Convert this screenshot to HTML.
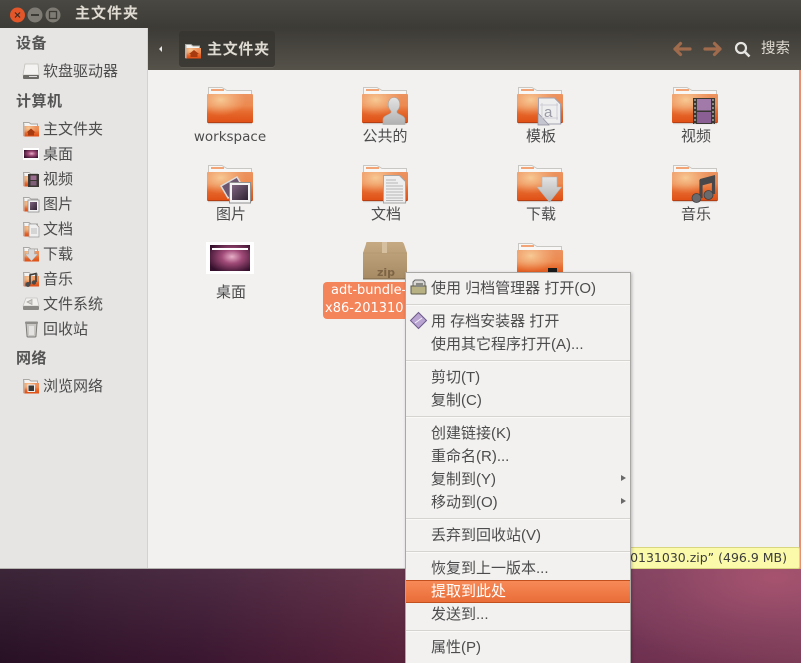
<!DOCTYPE html>
<html lang="zh"><head><meta charset="utf-8"><title>主文件夹</title>
<style>
html,body{margin:0;padding:0;width:801px;height:663px;overflow:hidden;background:#3a1a30}
body{position:relative;font-family:"Liberation Sans","Noto Sans CJK SC",sans-serif;font-size:15px;color:#4c4c4c}
div{position:absolute;white-space:nowrap}
svg{position:absolute;left:0;top:0}
#desk{left:0;top:568px;width:801px;height:95px;background:radial-gradient(ellipse 200px 90px at 775px 10px,rgba(170,84,112,.9) 0%,rgba(150,74,104,.5) 55%,rgba(130,60,90,0) 100%),linear-gradient(to bottom,rgba(255,255,255,.09),rgba(255,255,255,0)),linear-gradient(to right,#281024 0%,#3a1630 25%,#57213a 50%,#6f3050 80%,#7a3a55 100%)}
#win{left:0;top:0;width:799px;height:568px;background:#f2f1f0;border-bottom:1px solid #b5b3af}
#edge{left:799px;top:70px;width:2px;height:499px;background:#e88f72}
#title{left:0;top:0;width:801px;height:28px;background:linear-gradient(#4a4842,#3c3b36)}
#tool{left:148px;top:28px;width:653px;height:42px;background:linear-gradient(#3d3b36,#55524a)}
#side{left:0;top:28px;width:147px;height:540px;background:#e6e5e3;border-right:1px solid #d4d2cf}
#path{left:179px;top:31px;width:96px;height:36px;background:linear-gradient(#383631,#3d3a35);border-radius:3px;box-shadow:0 1px 0 #5e5b53}
.t{line-height:20px;height:20px}
.h{font-weight:bold;left:16px;color:#555;letter-spacing:.5px}
.s{left:43px}
.l{width:130px;text-align:center;color:#4c4c4c}
#sel{left:323px;top:282px;width:120px;height:37px;background:#f4845a;border-radius:4px}
#sel div{color:#fff;left:8px;font-family:"DejaVu Sans",sans-serif;font-size:13px;line-height:18px}
#tip{left:625px;top:547px;width:173px;height:20px;background:#fbfaaa;border:1px solid #d8d67e;border-radius:2px}
#tip div{right:12px;top:0;font-family:"DejaVu Sans",sans-serif;font-size:12.5px;color:#3c3c3c;line-height:20px}
#menu{left:405px;top:272px;width:224px;height:392px;background:#f2f1f0;border:1px solid #aaa8a4;box-shadow:1px 1px 3px rgba(0,0,0,.25)}
.m{left:25px;height:20px;line-height:20px;color:#4c4c4c}
.sep{left:0;width:224px;height:1px;background:#d6d4d1;border-bottom:1px solid #faf9f8}
.ar{left:215px;width:0;height:0;border-left:5px solid #6a6a6a;border-top:3.5px solid transparent;border-bottom:3.5px solid transparent}
#hi{left:0;top:307px;width:224px;height:21px;background:linear-gradient(#f78a58,#e96d38);border:1px solid #c2501f;border-left:0;border-right:0}
</style></head><body>
<div id="desk"></div>
<div id="win"></div><div id="edge"></div>
<div id="title"></div>
<div id="tool"></div>
<div id="side"></div>
<div id="path"></div>

<svg width="801" height="663" viewBox="0 0 801 663">
<defs>
<linearGradient id="fg" x1="0" y1="0" x2="0" y2="1"><stop offset="0" stop-color="#ec9360"/><stop offset=".4" stop-color="#ec8a50"/><stop offset=".62" stop-color="#e66a2e"/><stop offset="1" stop-color="#df4e14"/></linearGradient>
<radialGradient id="fl" cx=".3" cy=".2" r=".55"><stop offset="0" stop-color="#f8cd98" stop-opacity=".95"/><stop offset="1" stop-color="#f5b583" stop-opacity="0"/></radialGradient>
<radialGradient id="dk" cx=".55" cy=".45" r=".65"><stop offset="0" stop-color="#e8b0c8"/><stop offset=".4" stop-color="#a04a78"/><stop offset="1" stop-color="#35102c"/></radialGradient>
<linearGradient id="ph" x1="0" y1="0" x2="1" y2="1"><stop offset="0" stop-color="#7e6480"/><stop offset="1" stop-color="#2f2233"/></linearGradient>
<linearGradient id="pg" x1="0" y1="0" x2="0" y2="1"><stop offset="0" stop-color="#e4e4e4"/><stop offset="1" stop-color="#b0b0b0"/></linearGradient>
<linearGradient id="zp" x1="0" y1="0" x2="0" y2="1"><stop offset="0" stop-color="#c6aa84"/><stop offset="1" stop-color="#a68a64"/></linearGradient>
<symbol id="f" viewBox="0 0 46 38" overflow="visible">
<path d="M1.5 9V1.500H15L20 4.500H44.500V9" fill="#f8f7f5" stroke="#c9c7c3"/>
<rect x="4" y="3" width="13" height="2" fill="#f2a476"/>
<rect x="0" y="8" width="46" height="29" rx="1" fill="url(#fg)"/>
<rect x="0" y="8" width="46" height="29" rx="1" fill="url(#fl)"/>
<rect x="1" y="36" width="44" height="1.200" fill="#b53f14"/>
<rect x="1" y="37.200" width="44" height="1" fill="#d5d3d0"/>
</symbol>
<symbol id="sf" viewBox="0 0 16 16" overflow="visible">
<path d="M.5 15V1.500H6L8 3H14.500V6" fill="#f4f3f1" stroke="#a9a7a3"/>
<rect x="1" y="5" width="15" height="10.500" fill="url(#fg)"/>
<rect x="1" y="5" width="15" height="10.500" fill="url(#fl)"/>
<rect x=".5" y="2.500" width="1" height="13" fill="#bbb"/>
</symbol>
</defs>

<circle cx="17.500" cy="15" r="7.500" fill="#e2562a"/><path d="M15 12.500l5 5M20 12.500l-5 5" stroke="#3b2a22" stroke-width="1.200"/>
<circle cx="35" cy="15" r="7.500" fill="#7d7b73"/><rect x="31" y="14" width="8" height="2" fill="#3c3b36"/>
<circle cx="53" cy="15" r="7.500" fill="#7d7b73"/><rect x="49.500" y="11.500" width="7" height="7" fill="none" stroke="#3c3b36" stroke-width="1.300"/>

<path d="M162 46v6l-3-3z" fill="#e8e8e8"/>
<g transform="translate(185,43)"><use href="#sf" width="16" height="16"/><path d="M4 11l5-4 5 4h-1.500v3h-7v-3z" fill="#a83a10"/></g>
<path d="M690 49h-15M680.500 43.500L675 49l5.500 5.500" fill="none" stroke="#a06a4c" stroke-width="3.200" stroke-linecap="round" stroke-linejoin="round"/>
<path d="M705 49h15M714.500 43.500L720 49l-5.500 5.500" fill="none" stroke="#a06a4c" stroke-width="3.200" stroke-linecap="round" stroke-linejoin="round"/>
<circle cx="741" cy="48" r="5" fill="none" stroke="#e6e5e2" stroke-width="2.200"/><path d="M745 52l4.500 4.500" stroke="#e6e5e2" stroke-width="2.600"/>

<path d="M25 64h13l1 11H23z" fill="#f4f3f1" stroke="#c2c0bc" stroke-width=".8"/><rect x="23" y="75" width="16" height="4" rx="1" fill="#6d6c69"/><rect x="29" y="76" width="8" height="1" fill="#ddd"/>
<g transform="translate(23,121)"><use href="#sf" width="16" height="16"/><path d="M3.500 11.500l4.500-4 4.500 4H11v3H5v-3z" fill="#a83a10"/></g>
<rect x="23" y="148" width="16" height="12" fill="#fff"/><rect x="24" y="150" width="14" height="8" fill="url(#dk)"/>
<g transform="translate(23,171)"><use href="#sf" width="16" height="16"/><rect x="5" y="3" width="11" height="13" fill="#3b3733"/><rect x="7.500" y="4.500" width="6" height="4.500" fill="#9b6d8e"/><rect x="7.500" y="10" width="6" height="4.500" fill="#7f5e78"/></g>
<g transform="translate(23,196)"><use href="#sf" width="16" height="16"/><rect x="5" y="4" width="11" height="12" fill="#f2f2f2" stroke="#8e8e8e" stroke-width=".8"/><rect x="7" y="6" width="7" height="8" fill="url(#ph)"/></g>
<g transform="translate(23,221)"><use href="#sf" width="16" height="16"/><path d="M6 3h7l3 3v10H6z" fill="#efefef" stroke="#9a9a9a" stroke-width=".7"/><path d="M8 8h6M8 10h6M8 12h6" stroke="#aaa" stroke-width=".8"/></g>
<g transform="translate(23,246)"><use href="#sf" width="16" height="16"/><path d="M5.500 3h6v5h3.500L8.500 15 2 8h3.500z" fill="#d8d8d8" stroke="#9f9f9f" stroke-width=".5"/></g>
<g transform="translate(23,271)"><use href="#sf" width="16" height="16"/><path d="M7 13V4l6-1.500V11" fill="none" stroke="#3b3a38" stroke-width="1.600"/><circle cx="5" cy="13.500" r="2.500" fill="#4a4a4a"/><circle cx="11" cy="11.500" r="2.200" fill="#4a4a4a"/></g>
<path d="M26 298h11l2 8H23z" fill="#f1f0ee" stroke="#c6c4c0" stroke-width=".8"/><rect x="23" y="306" width="16" height="4" rx="1" fill="#8a8985"/><path d="M27 302l5-2.500v5z" fill="#cfcdc9" stroke="#a4a29e" stroke-width=".7"/>
<path d="M26 323h11l-1 13a1 1 0 0 1-1 1h-7a1 1 0 0 1-1-1z" fill="#c8c7c4" stroke="#7c7b78"/><rect x="25" y="321.500" width="13" height="2.500" rx="1" fill="#8f8e8b"/><rect x="29" y="326" width="5" height="9" fill="#e4e3e1"/>
<g transform="translate(23,378)"><use href="#sf" width="16" height="16"/><rect x="5" y="7" width="6.500" height="6.500" fill="#3a3835" stroke="#eee" stroke-width="1"/></g>

<use href="#f" x="207" y="86" width="46" height="38"/>
<use href="#f" x="362" y="86" width="46" height="38"/>
<use href="#f" x="517" y="86" width="46" height="38"/>
<use href="#f" x="672" y="86" width="46" height="38"/>
<use href="#f" x="207" y="164" width="46" height="38"/>
<use href="#f" x="362" y="164" width="46" height="38"/>
<use href="#f" x="517" y="164" width="46" height="38"/>
<use href="#f" x="672" y="164" width="46" height="38"/>
<use href="#f" x="517" y="242" width="46" height="38"/>

<path d="M383 124.500v-5c0-4 6-4.500 8-7v-1.500c-2-2-2.800-4-2.800-6.500 0-4 2.300-7 5.800-7s5.800 3 5.800 7c0 2.500-.8 4.500-2.800 6.500v1.500c2 2.500 8 3 8 7v5z" fill="url(#pg)" stroke="#a4a4a2" stroke-width=".6"/>
<path d="M538.500 98h16l6 6v20h-22z" fill="#eeeeee" stroke="#a2a2b0"/>
<path d="M538 113l11 12h-11z" fill="#c5c5cf" stroke="#8e8e9c" stroke-width=".7"/>
<text x="544" y="117" font-family="Liberation Sans" font-size="15" fill="#9a9aa6">a</text>
<path d="M542 103v17M557 103v17M540 105h18M540 118h18" stroke="#c3c3cd" stroke-width=".7" fill="none"/>
<rect x="693" y="98" width="22" height="26" fill="#3b3834"/>
<rect x="697" y="99" width="14" height="11.500" fill="#a27aaa"/><rect x="697" y="112" width="14" height="11" fill="#8b5f94"/>
<path d="M695 99v25M713 99v25" stroke="#a09c96" stroke-width="1.600" stroke-dasharray="2 2"/>
<path d="M221 186l16-9 7 12-16 9z" fill="#6c5670" stroke="#dcdcdc" stroke-width="1.500"/>
<rect x="229.500" y="182.500" width="21" height="20.500" fill="#f3f3f3" stroke="#909090"/>
<rect x="232" y="185" width="16" height="15" fill="url(#ph)"/>
<path d="M383.500 175.500h16l6 6v21.500h-22z" fill="#eeeeee" stroke="#a6a6a6"/>
<path d="M386 180h10M386 183h12M386 186h17M386 189h17M386 192h17M386 195h17M386 198h17M386 200.500h17" stroke="#b5b5b5"/>
<path d="M542 177h15v10h4.500L549.500 202 537 187h5z" fill="url(#pg)" stroke="#b5b5b5" stroke-width=".6"/>
<path d="M701 198v-17l12.500-3v16" fill="none" stroke="#48474a" stroke-width="3.200"/><path d="M700 179l15-4v7l-15 4z" fill="#48474a"/>
<circle cx="696.500" cy="198" r="4.500" fill="#6a6a6c" stroke="#3f3f41" stroke-width=".8"/>
<circle cx="708.500" cy="195" r="4.500" fill="#6a6a6c" stroke="#3f3f41" stroke-width=".8"/>
<rect x="206" y="242" width="48" height="32" fill="#fff"/>
<rect x="210" y="245" width="40" height="26" fill="url(#dk)"/>
<rect x="212" y="248" width="36" height="2" fill="#fff"/>
<path d="M367 242h35q1 0 2 2l3 9v26h-44v-26l3-9q0-2 1-2z" fill="url(#zp)"/>
<path d="M363 253h44" stroke="#b59970"/>
<rect x="382" y="242" width="5" height="11" fill="#d5bf9f"/>
<rect x="363" y="278" width="44" height="1.500" fill="#8f7654"/>
<text x="377" y="276" font-family="DejaVu Sans" font-weight="bold" font-size="11" fill="#7d6444">zip</text>
<path d="M548 272v-4h9v4z" fill="#1a1a1a"/>
</svg>

<div class="t" style="left:75px;top:2px;font-weight:bold;color:#dfdbd2;letter-spacing:1px;line-height:24px;height:24px">主文件夹</div>
<div class="t" style="left:207px;top:40px;font-weight:bold;color:#dfdbd2;letter-spacing:.7px">主文件夹</div>
<div class="t" style="left:761px;top:39px;color:#dfdbd2;font-size:14.500px">搜索</div>

<div class="t h" style="top:34px">设备</div>
<div class="t s" style="top:62px">软盘驱动器</div>
<div class="t h" style="top:92px">计算机</div>
<div class="t s" style="top:120px">主文件夹</div>
<div class="t s" style="top:145px">桌面</div>
<div class="t s" style="top:170px">视频</div>
<div class="t s" style="top:195px">图片</div>
<div class="t s" style="top:220px">文档</div>
<div class="t s" style="top:245px">下载</div>
<div class="t s" style="top:270px">音乐</div>
<div class="t s" style="top:295px">文件系统</div>
<div class="t s" style="top:320px">回收站</div>
<div class="t h" style="top:349px">网络</div>
<div class="t s" style="top:377px">浏览网络</div>

<div class="t l" style="left:165px;top:127px;font-family:'DejaVu Sans',sans-serif;font-size:13.500px">workspace</div>
<div class="t l" style="left:320px;top:127px">公共的</div>
<div class="t l" style="left:476px;top:127px">模板</div>
<div class="t l" style="left:631px;top:127px">视频</div>
<div class="t l" style="left:166px;top:205px">图片</div>
<div class="t l" style="left:321px;top:205px">文档</div>
<div class="t l" style="left:476px;top:205px">下载</div>
<div class="t l" style="left:631px;top:205px">音乐</div>
<div class="t l" style="left:166px;top:283px">桌面</div>

<div id="sel"><div style="top:0">adt-bundle-</div><div style="top:18px;left:2px">x86-201310</div></div>
<div id="tip"><div>0131030.zip” (496.9 MB)</div></div>

<div id="menu">
<svg width="26" height="70" viewBox="0 0 26 70">
<path d="M7 14V9l2-2h8l2 2v5z" fill="#d9d8d4" stroke="#666"/>
<path d="M5 13h15v7a1 1 0 0 1-1 1H6a1 1 0 0 1-1-1z" fill="#b8b184" stroke="#5c5a48"/>
<rect x="10" y="10" width="7" height="4" fill="#8a8a84"/>
<path d="M12.500 39.500l8 8-8 8-8-8z" fill="#b9a4d2" stroke="#6d5a8a"/>
<path d="M9 50l7-5" stroke="#f2f0f6"/>
</svg>
<div class="m" style="top:6px">使用 归档管理器 打开(O)</div>
<div class="sep" style="top:31px"></div>
<div class="m" style="top:39px">用 存档安装器 打开</div>
<div class="m" style="top:62px">使用其它程序打开(A)...</div>
<div class="sep" style="top:87px"></div>
<div class="m" style="top:95px">剪切(T)</div>
<div class="m" style="top:118px">复制(C)</div>
<div class="sep" style="top:143px"></div>
<div class="m" style="top:151px">创建链接(K)</div>
<div class="m" style="top:174px">重命名(R)...</div>
<div class="m" style="top:197px">复制到(Y)</div><div class="ar" style="top:202px"></div>
<div class="m" style="top:220px">移动到(O)</div><div class="ar" style="top:225px"></div>
<div class="sep" style="top:245px"></div>
<div class="m" style="top:253px">丢弃到回收站(V)</div>
<div class="sep" style="top:278px"></div>
<div class="m" style="top:286px">恢复到上一版本...</div>
<div id="hi"></div>
<div class="m" style="top:309px;color:#fff">提取到此处</div>
<div class="m" style="top:332px">发送到...</div>
<div class="sep" style="top:357px"></div>
<div class="m" style="top:365px">属性(P)</div>
</div>
</body></html>
